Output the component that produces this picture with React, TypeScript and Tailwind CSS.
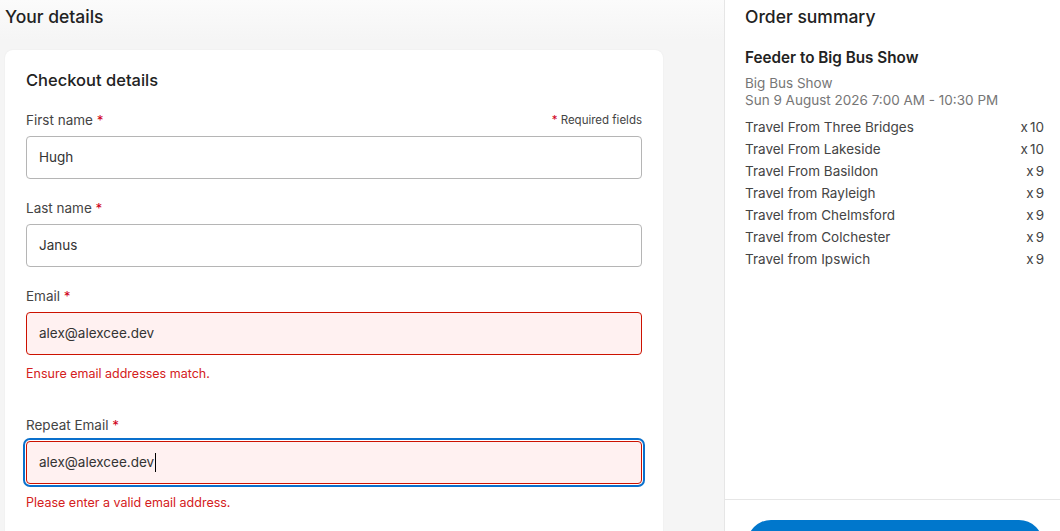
import React from "react";

type Field = {
  label: string;
  value: string;
  error?: string;
  focused?: boolean;
};

const fields: Field[] = [
  { label: "First name", value: "Hugh" },
  { label: "Last name", value: "Janus" },
  { label: "Email", value: "alex@alexcee.dev", error: "Ensure email addresses match." },
  { label: "Repeat Email", value: "alex@alexcee.dev", error: "Please enter a valid email address.", focused: true },
];

const items: [string, number][] = [
  ["Travel From Three Bridges", 10],
  ["Travel From Lakeside", 10],
  ["Travel From Basildon", 9],
  ["Travel from Rayleigh", 9],
  ["Travel from Chelmsford", 9],
  ["Travel from Colchester", 9],
  ["Travel from Ipswich", 9],
];

function FormField({ field, first }: { field: Field; first?: boolean }) {
  const invalid = !!field.error;
  return (
    <div className={field.error ? "mb-[32px]" : "mb-[19px]"}>
      <div className="flex items-end justify-between h-5">
        <label className="text-[13.5px] leading-5 text-[#444]">
          {field.label} <span className="text-[#d0021b]">*</span>
        </label>
        {first && (
          <span className="text-[11.5px] leading-5 text-[#444]">
            <span className="text-[#d0021b]">*</span> Required fields
          </span>
        )}
      </div>
      <div
        className={
          "mt-[6px] h-[43px] rounded-[4px] border flex items-center px-3 text-[13.5px] text-[#333] " +
          (invalid ? "border-[#cc1100] bg-[#fff1f1] " : "border-[#b5b5b5] bg-white ") +
          (field.focused ? "ring-2 ring-[#0a70cc] ring-offset-1 ring-offset-white" : "")
        }
      >
        <span>{field.value}</span>
        {field.focused && <span className="inline-block w-px h-[19px] bg-black ml-[1px]" />}
      </div>
      {field.error && (
        <p className="mt-[10px] text-[12.5px] leading-[18px] text-[#d42020]">{field.error}</p>
      )}
    </div>
  );
}

export default function App() {
  return (
    <div
      className="flex w-full h-[531px] overflow-hidden text-[#222]"
      style={{ fontFamily: "Inter, 'Noto Sans', sans-serif" }}
    >
      <main className="flex-1 bg-[#f5f5f5] bg-gradient-to-b from-[#fbfbfb] to-[#f5f5f5] bg-[length:100%_40px] bg-no-repeat pl-[5px]">
        <h1 className="pt-[6px] h-[50px] text-[17.5px] leading-[22px] font-medium text-[#222]">Your details</h1>
        <section className="w-[658px] rounded-[8px] bg-white px-[21px] pt-[19px] pb-6 shadow-[0_0_2px_rgba(0,0,0,0.06)]">
          <h2 className="text-[16.5px] leading-[22px] font-medium text-[#222] mb-[19px]">Checkout details</h2>
          {fields.map((f, i) => (
            <FormField key={f.label} field={f} first={i === 0} />
          ))}
        </section>
      </main>
      <aside className="w-[336px] shrink-0 bg-white border-l border-[#e6e6e6] flex flex-col">
        <div className="flex-1 pl-5 pr-4 pt-[6px]">
          <h2 className="text-[17.5px] leading-[22px] font-medium text-[#222]">Order summary</h2>
          <h3 className="mt-[19px] text-[15.25px] leading-[22px] font-semibold text-[#222]">Feeder to Big Bus Show</h3>
          <div className="mt-[6px] text-[13.5px] leading-[17px] text-[#767676]">
            <p>Big Bus Show</p>
            <p>Sun 9 August 2026 7:00 AM - 10:30 PM</p>
          </div>
          <ul className="mt-[7px] text-[13.5px] text-[#444]">
            {items.map(([name, qty]) => (
              <li key={name} className="flex justify-between h-[22px] items-center">
                <span>{name}</span>
                <span>
                  x<span className="ml-[2px]">{qty}</span>
                </span>
              </li>
            ))}
          </ul>
        </div>
        <div className="h-[32px] border-t border-[#e6e6e6] pt-5 px-[22px] shrink-0 overflow-visible">
          <button aria-label="Continue" className="w-[296px] h-12 rounded-full bg-[#0077cc]" />
        </div>
      </aside>
    </div>
  );
}
